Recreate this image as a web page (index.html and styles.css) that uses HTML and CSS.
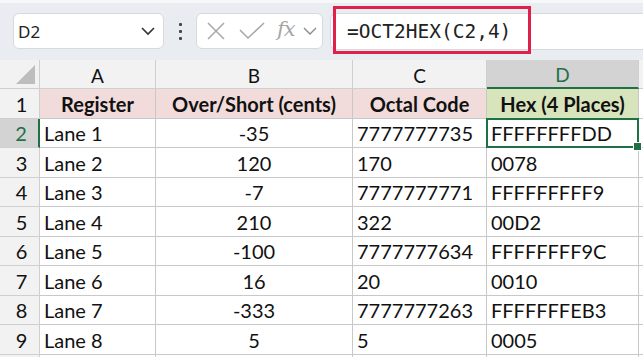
FILE: index.html
```html
<!DOCTYPE html>
<html>
<head>
<meta charset="utf-8">
<link rel="stylesheet" href="styles.css">
</head>
<body>
<div class="app">
  <div class="topbar">
    <div class="namebox">
      <span class="name">D2</span>
      <svg class="chev" width="16" height="10" viewBox="0 0 16 10"><path d="M2 2 L8 8 L14 2" fill="none" stroke="#333" stroke-width="1.6"/></svg>
    </div>
    <div class="dots"><span></span><span></span><span></span></div>
    <div class="fxbox">
      <svg width="20" height="20" viewBox="0 0 20 20"><path d="M2 2 L18 18 M18 2 L2 18" stroke="#a6a6a6" stroke-width="1.5" fill="none"/></svg>
      <svg width="26" height="18" viewBox="0 0 26 18"><path d="M1 8 L9 16 L25 1" stroke="#a6a6a6" stroke-width="1.5" fill="none"/></svg>
      <span class="fx">fx</span>
      <svg width="14" height="8" viewBox="0 0 14 8"><path d="M1 1 L7 7 L13 1" fill="none" stroke="#8a8a8a" stroke-width="1.4"/></svg>
    </div>
    <div class="formula">
      <span class="ftext">=OCT2HEX(C2,4)</span>
      <div class="highlight"></div>
    </div>
  </div>
  <div class="sheet">
    <div class="corner"><div class="tri"></div></div>
    <div class="ch">A</div><div class="ch">B</div><div class="ch">C</div><div class="ch sel">D</div><div class="ch end"></div>

    <div class="rh">1</div>
    <div class="c hd pink">Register</div><div class="c hd pink">Over/Short (cents)</div><div class="c hd pink">Octal Code</div><div class="c hd green">Hex (4 Places)</div><div class="c end"></div>

    <div class="rh sel">2</div>
    <div class="c">Lane 1</div><div class="c ctr">-35</div><div class="c">7777777735</div><div class="c active">FFFFFFFFDD</div><div class="c end"></div>

    <div class="rh">3</div>
    <div class="c">Lane 2</div><div class="c ctr">120</div><div class="c">170</div><div class="c">0078</div><div class="c end"></div>

    <div class="rh">4</div>
    <div class="c">Lane 3</div><div class="c ctr">-7</div><div class="c">7777777771</div><div class="c">FFFFFFFFF9</div><div class="c end"></div>

    <div class="rh">5</div>
    <div class="c">Lane 4</div><div class="c ctr">210</div><div class="c">322</div><div class="c">00D2</div><div class="c end"></div>

    <div class="rh">6</div>
    <div class="c">Lane 5</div><div class="c ctr">-100</div><div class="c">7777777634</div><div class="c">FFFFFFFF9C</div><div class="c end"></div>

    <div class="rh">7</div>
    <div class="c">Lane 6</div><div class="c ctr">16</div><div class="c">20</div><div class="c">0010</div><div class="c end"></div>

    <div class="rh">8</div>
    <div class="c">Lane 7</div><div class="c ctr">-333</div><div class="c">7777777263</div><div class="c">FFFFFFFEB3</div><div class="c end"></div>

    <div class="rh">9</div>
    <div class="c">Lane 8</div><div class="c ctr">5</div><div class="c">5</div><div class="c">0005</div><div class="c end"></div>

    <div class="rh"></div>
    <div class="c"></div><div class="c"></div><div class="c"></div><div class="c"></div><div class="c end"></div>
  </div>
</div>
</body>
</html>
```
FILE: styles.css
```css
* { box-sizing: border-box; }
html, body { margin: 0; padding: 0; }
body { width: 643px; height: 357px; overflow: hidden; background: #fff; }
.app { width: 643px; height: 357px; overflow: hidden; }

.topbar {
  height: 60px;
  background: #e9edf1;
  border-top: 3px solid #f6f7f9;
  display: flex;
  align-items: flex-start;
  padding-top: 10px;
  position: relative;
}
.namebox {
  margin-left: 13px;
  width: 151px;
  height: 36px;
  background: #fff;
  border: 1px solid #d6dadf;
  border-radius: 6px;
  display: flex;
  align-items: center;
  justify-content: space-between;
  padding: 0 7px 0 4px;
  font-family: "Noto Sans", "Open Sans", sans-serif;
  font-size: 17px;
  color: #222;
}
.chev { display: block; }
.dots {
  width: 32px;
  height: 36px;
  display: flex;
  flex-direction: column;
  align-items: center;
  justify-content: center;
  gap: 4px;
}
.dots span { width: 3px; height: 3px; background: #454545; border-radius: 1px; }
.fxbox {
  width: 127px;
  height: 36px;
  background: #fff;
  border: 1px solid #d6dadf;
  border-radius: 6px;
  display: flex;
  align-items: center;
  padding-left: 9px;
  gap: 0;
}
.fxbox svg:nth-child(1) { margin-right: 13px; }
.fxbox svg:nth-child(2) { margin-right: 12px; }
.fx {
  font-family: "DejaVu Serif", "Liberation Serif", serif;
  font-style: italic;
  font-size: 21px;
  color: #a6a6a6;
  margin-right: 8px;
  letter-spacing: -1px;
  line-height: 1;
  padding-bottom: 3px;
}
.formula {
  margin-left: 7px;
  flex: 1;
  height: 37px;
  background: #fff;
  border: 1px solid #d6dadf;
  border-right: none;
  border-radius: 6px 0 0 6px;
  display: flex;
  align-items: center;
  padding-left: 16px;
  font-family: "DejaVu Sans Mono", "Liberation Mono", monospace;
  font-size: 19.5px;
  color: #222;
  position: relative;
}
.highlight {
  position: absolute;
  left: 2px;
  top: -8px;
  width: 198px;
  height: 48px;
  border: 3px solid #e0204b;
}

.sheet {
  display: grid;
  grid-template-columns: 40px 116px 197px 134px 152px 1fr;
  grid-template-rows: 29px 30px 29px 30px 29px 30px 29px 30px 29px 30px 30px;
  font-family: Lato, "Open Sans", sans-serif;
  font-size: 20px;
  color: #111;
}
.corner {
  background: #f2f2f2;
  border-right: 1px solid #cfcfcf;
  border-bottom: 1px solid #cfcfcf;
  position: relative;
}
.tri {
  position: absolute;
  right: 4px;
  bottom: 4px;
  width: 0; height: 0;
  border-left: 19px solid transparent;
  border-bottom: 19px solid #bdbdbd;
}
.ch {
  background: #f2f2f2;
  border-right: 1px solid #cfcfcf;
  border-bottom: 1px solid #cfcfcf;
  display: flex;
  align-items: center;
  justify-content: center;
  font-size: 19px;
  color: #111;
  padding-top: 2px;
}
.ch.sel {
  background: #d3d3d3;
  color: #1e7145;
  border-bottom: 2px solid #1e7145;
}
.ch.end { border-right: none; }
.rh {
  background: #f2f2f2;
  border-right: 1px solid #cfcfcf;
  border-bottom: 1px solid #cfcfcf;
  display: flex;
  align-items: flex-end;
  justify-content: center;
  padding-bottom: 2px;
  padding-left: 4px;
  color: #111;
}
.rh.sel {
  background: #d3d3d3;
  color: #1e7145;
  border-right: 2px solid #1e7145;
}
.c {
  border-right: 1px solid #c8c8c8;
  border-bottom: 1px solid #c8c8c8;
  display: flex;
  align-items: flex-end;
  padding: 0 4px 2px 4px;
  white-space: nowrap;
  overflow: visible;
}
.c.end { border-right: none; }
.ctr { justify-content: center; }
.hd { font-weight: bold; justify-content: center; }
.pink { background: #f2dcdb; }
.green { background: #d8e4bc; }
.active { position: relative; }
.active::after {
  content: "";
  position: absolute;
  left: -1px; top: -1px; right: -1px; bottom: -1px;
  border: 2px solid #1e7145;
}
.active::before {
  content: "";
  position: absolute;
  right: -4px;
  bottom: -4px;
  width: 7px;
  height: 7px;
  background: #1e7145;
  border: 1px solid #fff;
  z-index: 2;
}
```
